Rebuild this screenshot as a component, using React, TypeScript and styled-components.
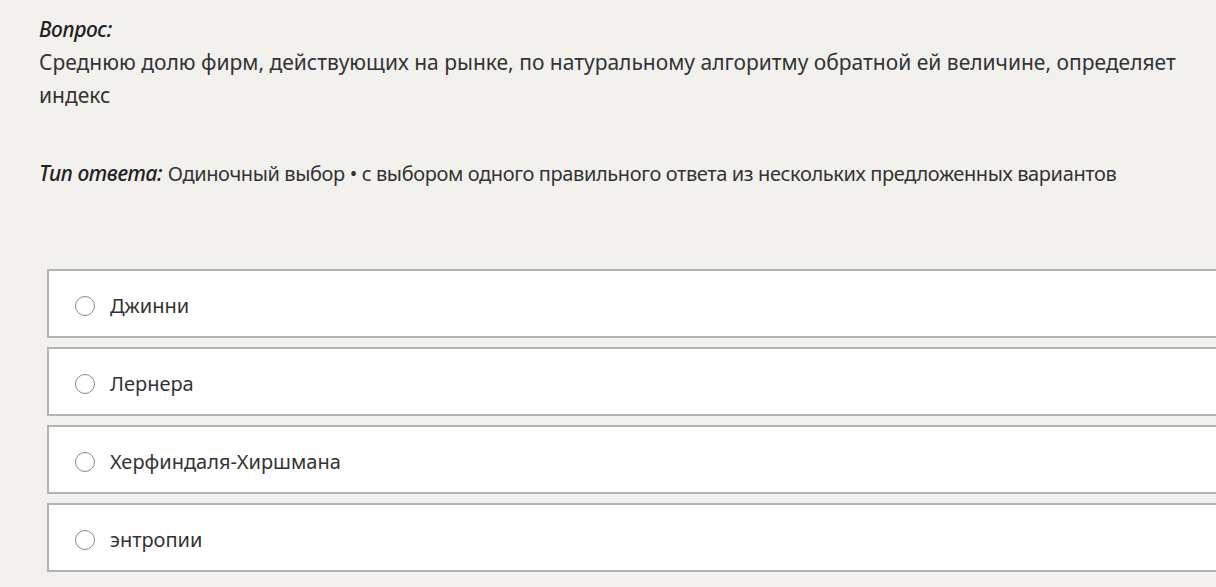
import React from "react";
import styled, { createGlobalStyle } from "styled-components";

const Global = createGlobalStyle`
  html, body { margin: 0; padding: 0; background: #f2f1ee; }
  body { font-family: "Noto Sans", "Open Sans", sans-serif; color: #333; overflow: hidden; }
`;

const Page = styled.div`
  width: 1216px;
  height: 587px;
  box-sizing: border-box;
  padding: 13px 0 0 39px;
  overflow: hidden;
`;

const Label = styled.span`
  font-style: italic;
  font-weight: 500;
  color: #222;
  letter-spacing: -0.4px;
  font-size: 21px;
`;

const Line = styled.div`
  font-size: 21px;
  line-height: 33px;
  white-space: nowrap;
`;

const Question = styled.div`
  font-size: 21px;
  line-height: 33px;
  width: 1160px;
`;

const TypeLine = styled(Line)`
  margin-top: 45px;
`;

const TypeValue = styled.span`
  font-size: 20px;
  letter-spacing: -0.38px;
`;

const Options = styled.div`
  margin: 79px -40px 0 8px;
  display: flex;
  flex-direction: column;
  gap: 9px;
`;

const Option = styled.label`
  display: flex;
  align-items: center;
  box-sizing: border-box;
  height: 69px;
  background: #fff;
  border: 2px solid #b3b3b3;
  padding: 4px 0 0 26px;
  font-size: 20px;
  color: #333;
`;

const Radio = styled.span`
  width: 18px;
  height: 18px;
  border: 1.5px solid #8a8a8a;
  border-radius: 50%;
  margin-right: 15px;
  flex: none;
`;

const options = ["Джинни", "Лернера", "Херфиндаля-Хиршмана", "энтропии"];

export default function App() {
  return (
    <>
      <Global />
      <Page>
        <Line>
          <Label>Вопрос:</Label>
        </Line>
        <Question>
          Среднюю долю фирм, действующих на рынке, по натуральному алгоритму обратной ей величине, определяет индекс
        </Question>
        <TypeLine>
          <Label>Тип ответа:</Label>{" "}
          <TypeValue>
            Одиночный выбор • с выбором одного правильного ответа из нескольких предложенных вариантов
          </TypeValue>
        </TypeLine>
        <Options>
          {options.map((o) => (
            <Option key={o}>
              <Radio />
              {o}
            </Option>
          ))}
        </Options>
      </Page>
    </>
  );
}
